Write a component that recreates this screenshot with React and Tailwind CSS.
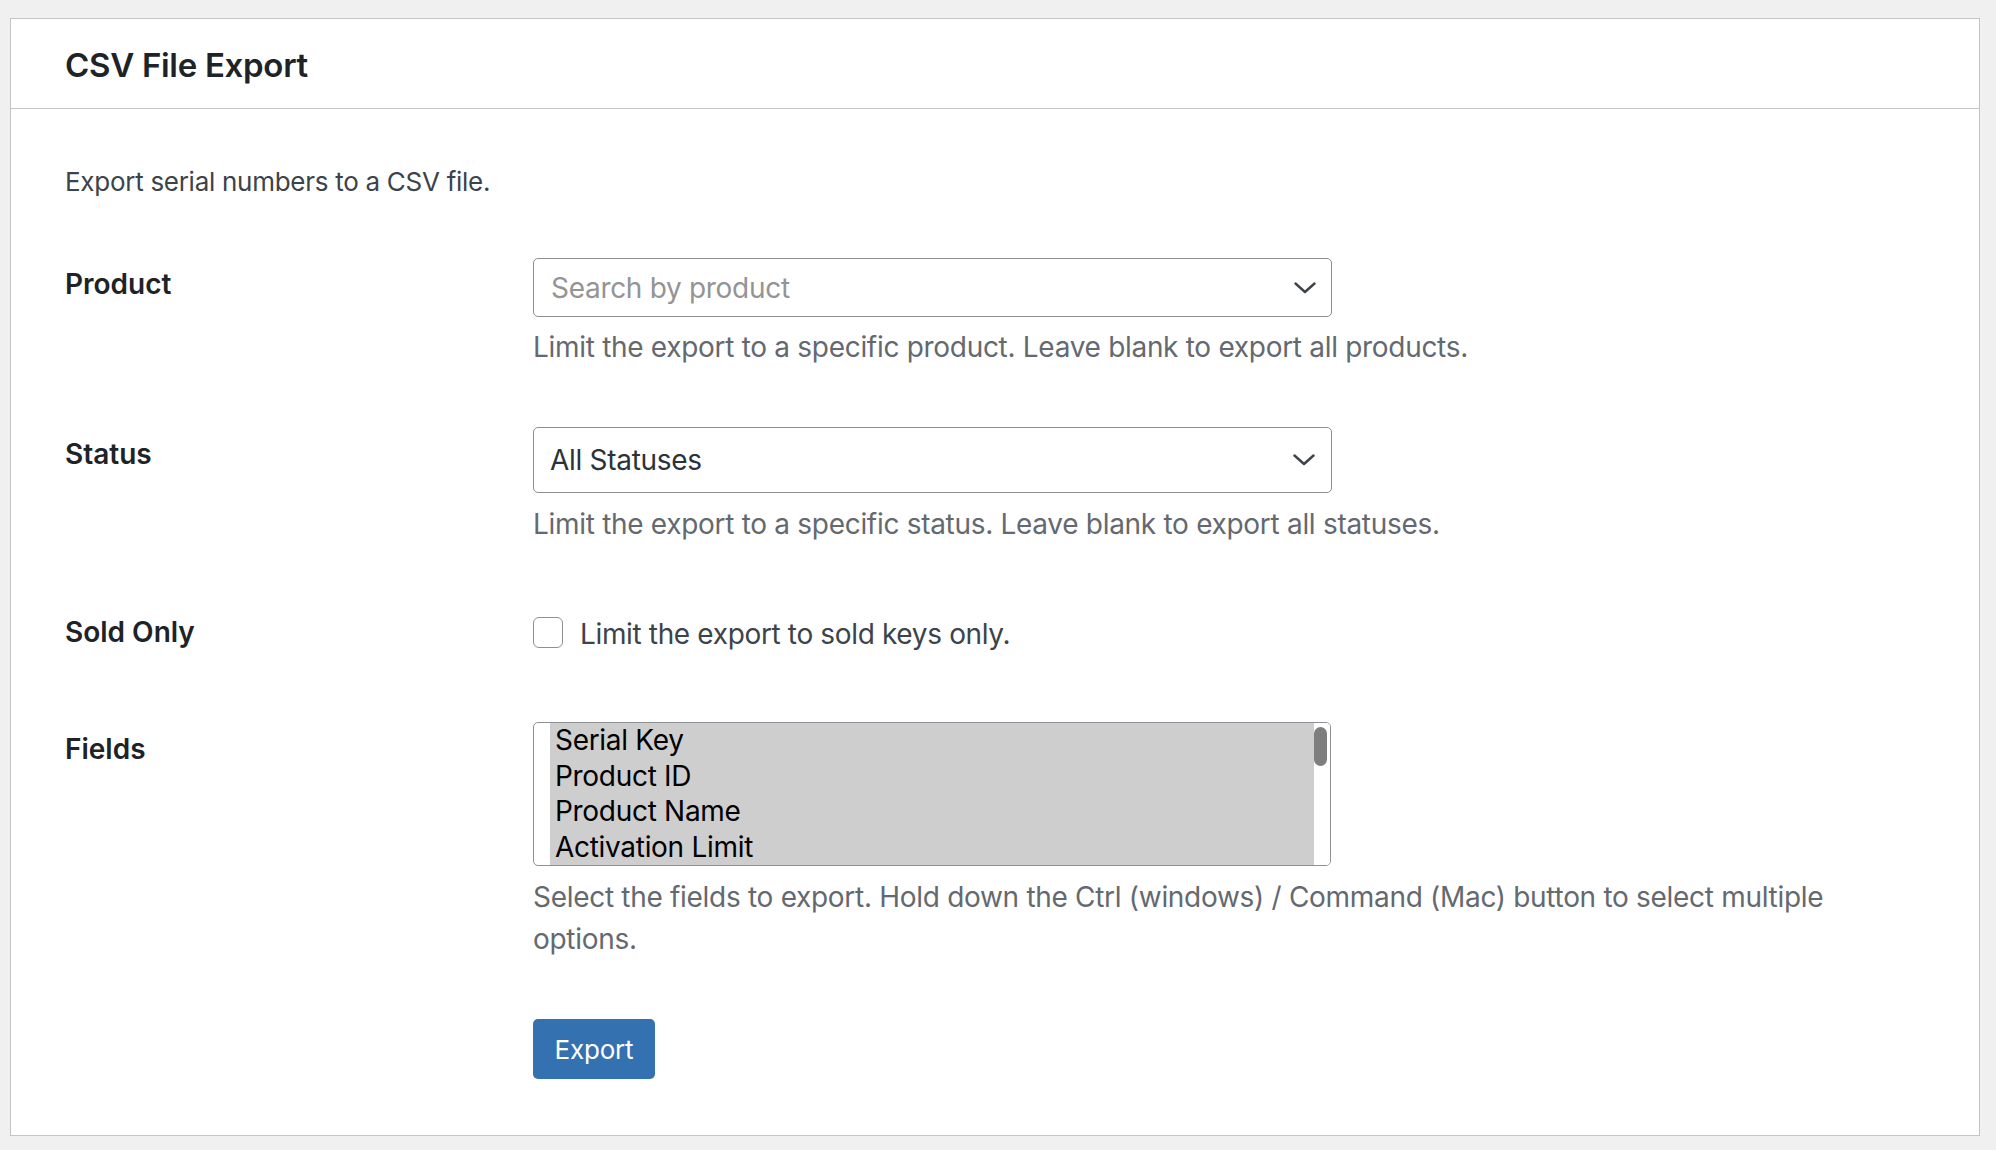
import React from "react";

function Chevron() {
  return (
    <svg width="22" height="12" viewBox="0 0 22 12" className="shrink-0">
      <polyline points="1.5,1.5 11,10 20.5,1.5" fill="none" stroke="#3c434a" strokeWidth="2.4" strokeLinecap="round" strokeLinejoin="round" />
    </svg>
  );
}

function Row({ label, labelPt, children, className }) {
  return (
    <div className={"flex " + className}>
      <div className="w-[468px] shrink-0">
        <div className={"text-[28px] leading-[36px] font-semibold text-[#1d2327] " + labelPt}>{label}</div>
      </div>
      <div className="flex-1 min-w-0">{children}</div>
    </div>
  );
}

export default function App() {
  const fields = ["Serial Key", "Product ID", "Product Name", "Activation Limit"];
  return (
    <div className="min-h-[1150px] w-[1996px] bg-[#f0f0f1] pt-[18px] pl-[10px] pr-[16px] font-['Inter','Noto_Sans',sans-serif]">
      <div className="bg-white border border-[#c3c4c7]">
        <div className="pl-[54px] pt-[25px] pb-[22px] border-b border-[#c3c4c7]">
          <h2 className="text-[33px] leading-[42px] font-semibold text-[#1d2327] tracking-[-0.3px]">CSV File Export</h2>
        </div>
        <div className="pl-[54px] pr-[64px] pt-[53px] pb-[56px]">
          <p className="text-[26px] leading-[39px] text-[#3c434a] tracking-[-0.28px]">Export serial numbers to a CSV file.</p>

          <Row label="Product" labelPt="pt-[8px]" className="mt-[57px]">
            <div className="w-[799px] h-[59px] border border-[#8c8f94] rounded-[5px] flex items-center justify-between pl-[17px] pr-[15px]">
              <span className="text-[28px] text-[#949494] tracking-[-0.3px]">Search by product</span>
              <Chevron />
            </div>
            <p className="mt-[9px] text-[28px] leading-[42px] text-[#646970] tracking-[-0.3px]">Limit the export to a specific product. Leave blank to export all products.</p>
          </Row>

          <Row label="Status" labelPt="pt-[8.5px]" className="mt-[59px]">
            <div className="w-[799px] h-[66px] border border-[#8c8f94] rounded-[5px] flex items-center justify-between pl-[16px] pr-[16px]">
              <span className="text-[28px] text-[#2c3338] tracking-[-0.3px]">All Statuses</span>
              <Chevron />
            </div>
            <p className="mt-[9.5px] text-[28px] leading-[42px] text-[#646970] tracking-[-0.3px]">Limit the export to a specific status. Leave blank to export all statuses.</p>
          </Row>

          <Row label="Sold Only" labelPt="pt-[1.5px]" className="mt-[68px]">
            <label className="flex items-center gap-[17px]">
              <span className="w-[30px] h-[31px] border border-[#8c8f94] rounded-[6px] bg-white shrink-0 mt-[-3px]"></span>
              <span className="text-[28px] leading-[42px] text-[#3c434a] tracking-[-0.35px]">Limit the export to sold keys only.</span>
            </label>
          </Row>

          <Row label="Fields" labelPt="pt-[9px]" className="mt-[67.5px]">
            <div className="w-[798px] h-[144px] border border-[#8c8f94] rounded-[5px] flex overflow-hidden pl-[16px]">
              <div className="flex-1 bg-[#cecece]">
                {fields.map((f) => (
                  <div key={f} className="h-[35.5px] leading-[35.5px] pl-[5px] text-[28px] text-black whitespace-nowrap tracking-[-0.3px]">{f}</div>
                ))}
              </div>
              <div className="w-[16px] shrink-0 bg-white pt-[4px]">
                <div className="w-[13px] h-[39px] rounded-full bg-[#7e7e7e]"></div>
              </div>
            </div>
            <p className="mt-[9.5px] text-[28px] leading-[42px] text-[#646970] tracking-[-0.3px]">Select the fields to export. Hold down the Ctrl (windows) / Command (Mac) button to select multiple options.</p>
            <button className="mt-[59.5px] w-[122px] h-[60px] rounded-[5px] bg-[#3371b0] text-white text-[26px] tracking-[-0.2px] flex items-center justify-center">Export</button>
          </Row>
        </div>
      </div>
    </div>
  );
}
